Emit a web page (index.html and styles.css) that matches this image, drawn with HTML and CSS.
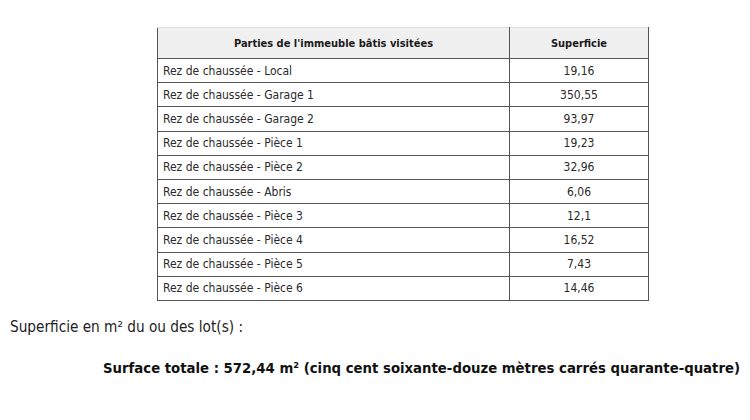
FILE: index.html
```html
<!DOCTYPE html>
<html lang="fr">
<head>
<meta charset="utf-8">
<link rel="stylesheet" href="styles.css">
</head>
<body>
<div class="page">
  <table class="surf">
    <thead>
      <tr><th class="c1">Parties de l'immeuble bâtis visitées</th><th class="c2">Superficie</th></tr>
    </thead>
    <tbody>
      <tr><td>Rez de chaussée - Local</td><td class="num">19,16</td></tr>
      <tr><td>Rez de chaussée - Garage 1</td><td class="num">350,55</td></tr>
      <tr><td>Rez de chaussée - Garage 2</td><td class="num">93,97</td></tr>
      <tr><td>Rez de chaussée - Pièce 1</td><td class="num">19,23</td></tr>
      <tr><td>Rez de chaussée - Pièce 2</td><td class="num">32,96</td></tr>
      <tr><td>Rez de chaussée - Abris</td><td class="num">6,06</td></tr>
      <tr><td>Rez de chaussée - Pièce 3</td><td class="num">12,1</td></tr>
      <tr><td>Rez de chaussée - Pièce 4</td><td class="num">16,52</td></tr>
      <tr><td>Rez de chaussée - Pièce 5</td><td class="num">7,43</td></tr>
      <tr><td>Rez de chaussée - Pièce 6</td><td class="num">14,46</td></tr>
    </tbody>
  </table>
  <p class="label">Superficie en m² du ou des lot(s) :</p>
  <p class="total">Surface totale : 572,44 m² (cinq cent soixante-douze mètres carrés quarante-quatre)</p>
</div>
</body>
</html>
```
FILE: styles.css
```css
html, body {
  margin: 0;
  padding: 0;
  background: #fff;
}
.page {
  padding-top: 27px;
  font-family: "DejaVu Sans", sans-serif;
  font-stretch: condensed;
  color: #333;
}
.surf {
  margin-left: 157px;
  width: 492px;
  border-collapse: collapse;
  font-size: 12px;
}
.surf th {
  background: #f0f0f0;
  height: 30px;
  font-size: 11px;
  font-weight: bold;
  color: #1a1a1a;
  border: 1.5px solid #555;
  border-top: 1px solid #ddd;
  padding: 0;
}
.surf .c1 { width: 351px; }
.surf td {
  height: 23.2px;
  border: 1.5px solid #555;
  padding: 0 0 0 5px;
  color: #2a2a2a;
}
.surf td.num {
  text-align: center;
  padding: 0;
}
.label {
  margin: 17px 0 0 10px;
  font-size: 15.2px;
  color: #222;
}
.total {
  margin: 23px 0 0 103px;
  font-size: 14.75px;
  font-weight: bold;
  color: #111;
  white-space: nowrap;
}
```
